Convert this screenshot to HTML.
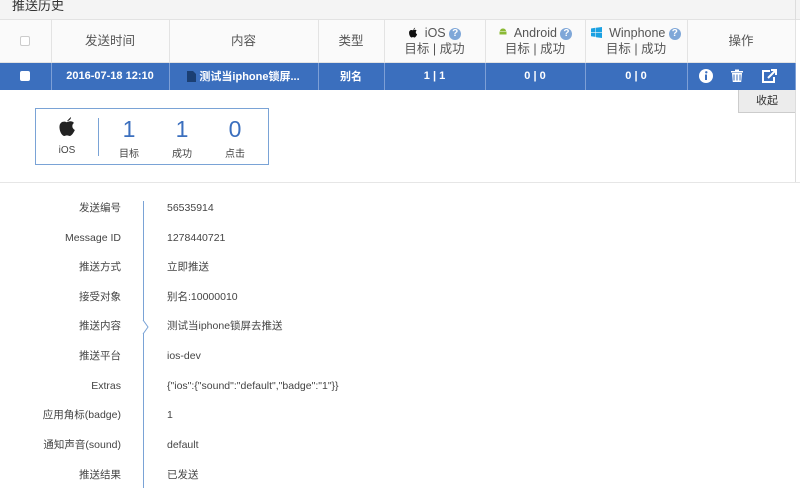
<!DOCTYPE html>
<html><head><meta charset="utf-8"><style>
*{margin:0;padding:0;box-sizing:border-box}
body{width:800px;height:488px;overflow:hidden;background:#fff;font-family:"Liberation Sans","Noto Sans CJK SC",sans-serif;color:#333;position:relative}
.title{position:absolute;left:0;top:0;width:800px;height:20px;background:#f4f4f4;border-bottom:1px solid #e2e2e2;font-size:13px;line-height:12px;padding-left:12px}
.rb{position:absolute;left:795px;top:0;width:1px;height:182px;background:#ddd}
table{position:absolute;left:0;top:20px;border-collapse:collapse;width:795px;table-layout:fixed}
td{text-align:center;border-right:1px solid #e3e3e3;font-size:12.5px}
tr.h td{height:42px;background:#fafafa;color:#555;border-bottom:1px solid #e3e3e3;line-height:16px}
tr.b td{height:28px;background:#3b6fbe;color:#fff;font-weight:bold;font-size:11px;border-right:1px solid #7d9fd6}
.cb{display:inline-block;width:10px;height:10px;border:1px solid #ccc;border-radius:2px;background:#fff;vertical-align:middle}
.q{display:inline-block;width:12px;height:12px;border-radius:6px;background:#7fa7d8;color:#fff;font-size:10px;line-height:12px;font-weight:bold;vertical-align:1px}
.btn{position:absolute;left:738px;top:90px;width:57px;height:23px;background:#ececec;border-left:1px solid #ccc;border-bottom:1px solid #ccc;font-size:11px;text-align:center;line-height:22px}
.box{position:absolute;left:35px;top:108px;width:234px;height:57px;border:1px solid #7aa3d6}
.box .n{position:absolute;top:8px;font-size:23px;color:#3b6fbe;width:40px;text-align:center;line-height:24px}
.box .l{position:absolute;top:36px;font-size:10px;color:#444;width:40px;text-align:center}
.sep{position:absolute;left:0;top:182px;width:800px;height:1px;background:#e6e6e6}
.vl{position:absolute;left:143px;top:201px;width:1px;height:287px;background:#7aa3d6}
.row{position:absolute;left:0;width:800px;font-size:10.5px;color:#444;height:14px;line-height:14px}
.row span{line-height:14px;height:14px;display:block;top:0}
.row .k{position:absolute;right:679px;white-space:nowrap}
.row .v{position:absolute;left:167px;white-space:nowrap}
</style></head><body>
<div class="title">推送历史</div>
<div class="rb"></div>
<table>
<colgroup><col style="width:51px"><col style="width:118px"><col style="width:149px"><col style="width:66px"><col style="width:101px"><col style="width:100px"><col style="width:102px"><col style="width:108px"></colgroup>
<tr class="h"><td><span class="cb"></span></td><td>发送时间</td><td>内容</td><td>类型</td>
<td><svg width="10" height="11" viewBox="0 0 10 12" style="vertical-align:-1px"><path d="M5 3C6 1.5 7 1 7.3 0.5 7.4 1.6 6.5 2.7 5 3ZM4.8 3.6C3.5 2.8 0.5 3 0.7 6.7 0.9 9.7 2.8 12 4 11.3 4.6 11 5.2 11 6 11.3 7.3 12 8.7 9.7 9.5 8 7.5 7 7.8 4.6 9 4 7.8 2.5 6 3 4.8 3.6Z" fill="#111"/></svg>&nbsp; iOS <span class="q">?</span><br>目标 | 成功</td>
<td><svg width="10" height="10" viewBox="0 0 10 10"><path d="M1.5 4.5h7v3h-7zM2 4a3 2.5 0 0 1 6 0z" fill="#8ab935"/></svg>&nbsp; Android <span class="q">?</span><br>目标 | 成功</td>
<td><svg width="11" height="11" viewBox="0 0 11 11" style="vertical-align:-1px"><path d="M0 1.5l4.5-.7v4.2H0zM5 .7L11 0v5H5zM0 5.6h4.5v4.3L0 9.3zM5 5.6h6V11L5 10.2z" fill="#1ba1e2"/></svg>&nbsp; Winphone <span class="q">?</span><br>目标 | 成功</td>
<td>操作</td></tr>
<tr class="b"><td><span class="cb" style="border-color:#fff"></span></td><td>2016-07-18 12:10</td>
<td><svg width="9" height="11" viewBox="0 0 9 11" style="vertical-align:-2px"><path d="M0 0h6l3 3v8H0z" fill="#1b3f73"/></svg> 测试当iphone锁屏...</td><td>别名</td><td>1 | 1</td><td>0 | 0</td><td>0 | 0</td>
<td style="text-align:left;padding-left:10px"><svg width="90" height="16" viewBox="0 0 90 16" style="vertical-align:middle"><circle cx="8" cy="8" r="7" fill="#fff"/><rect x="7" y="6.5" width="2" height="5.5" fill="#3b6fbe"/><circle cx="8.3" cy="4.3" r="1.2" fill="#3b6fbe"/><path d="M33 3h12v1.5H33zM37 1.5h4v1.5h-4zM34 5h10l-.8 9h-8.4z" fill="#fff"/><path d="M36 6.5v6M39 6.5v6M42 6.5v6" stroke="#3b6fbe" stroke-width="1"/><path d="M72 3h-7v11h11V9" stroke="#fff" stroke-width="2" fill="none"/><path d="M70 10l7-7M73 2h5v5" stroke="#fff" stroke-width="2" fill="none"/></svg></td></tr>
</table>
<div class="btn">收起</div>
<div class="box">
<svg style="position:absolute;left:22px;top:7px" width="18" height="21" viewBox="0 0 10 12"><path d="M5 3C6 1.5 7 1 7.3 0.5 7.4 1.6 6.5 2.7 5 3ZM4.8 3.6C3.5 2.8 0.5 3 0.7 6.7 0.9 9.7 2.8 12 4 11.3 4.6 11 5.2 11 6 11.3 7.3 12 8.7 9.7 9.5 8 7.5 7 7.8 4.6 9 4 7.8 2.5 6 3 4.8 3.6Z" fill="#222"/></svg>
<div class="l" style="left:11px">iOS</div>
<div style="position:absolute;left:62px;top:9px;width:1px;height:38px;background:#7aa3d6"></div>
<div class="n" style="left:73px">1</div><div class="l" style="left:73px">目标</div>
<div class="n" style="left:126px">1</div><div class="l" style="left:126px">成功</div>
<div class="n" style="left:179px">0</div><div class="l" style="left:179px">点击</div>
</div>
<div class="sep"></div>
<div class="vl"></div>
<svg style="position:absolute;left:142px;top:320px" width="8" height="14"><path d="M1 0L6 7 1 14" stroke="#7aa3d6" fill="#fff"/></svg>
<div class="row" style="top:201px"><span class="k">发送编号</span><span class="v">56535914</span></div>
<div class="row" style="top:231px"><span class="k">Message ID</span><span class="v">1278440721</span></div>
<div class="row" style="top:260px"><span class="k">推送方式</span><span class="v">立即推送</span></div>
<div class="row" style="top:290px"><span class="k">接受对象</span><span class="v">别名:10000010</span></div>
<div class="row" style="top:319px"><span class="k">推送内容</span><span class="v">测试当iphone锁屏去推送</span></div>
<div class="row" style="top:349px"><span class="k">推送平台</span><span class="v">ios-dev</span></div>
<div class="row" style="top:379px"><span class="k">Extras</span><span class="v">{"ios":{"sound":"default","badge":"1"}}</span></div>
<div class="row" style="top:408px"><span class="k">应用角标(badge)</span><span class="v">1</span></div>
<div class="row" style="top:438px"><span class="k">通知声音(sound)</span><span class="v">default</span></div>
<div class="row" style="top:468px"><span class="k">推送结果</span><span class="v">已发送</span></div>
</body></html>
